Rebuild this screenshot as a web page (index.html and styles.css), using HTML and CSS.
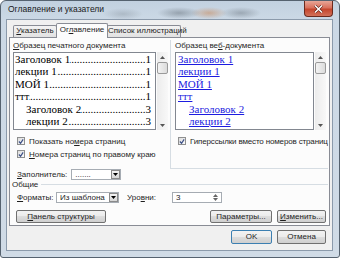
FILE: index.html
```html
<!DOCTYPE html>
<html>
<head>
	<meta charset="UTF-8">
	<title>Оглавление и указатели</title>
<link rel="stylesheet" href="styles.css">
</head>
<body>
<div class="window">
	<div class="titlebar">
		<span class="title">Оглавление и указатели</span>
		<span class="close"><svg width="9" height="8" viewBox="0 0 9 8"><path d="M1 0.5 L8 7.5 M8 0.5 L1 7.5" stroke="#5a1d12" stroke-width="2.6"/><path d="M1 0.5 L8 7.5 M8 0.5 L1 7.5" stroke="#fff" stroke-width="1.5"/></svg></span>
	</div>

	<div class="client">
		<div class="tabs">
			<span class="tab tab-index"><u>У</u>казатель</span>
			<span class="tab tab-toc active">Ог<u>л</u>авление</span>
			<span class="tab tab-figures">Список иллюстраций</span>
		</div>

		<div class="panel">
			<div class="top">
				<div class="col-left">
					<div class="label"><u>О</u>бразец печатного документа</div>
					<div class="preview">
						<div class="preview-text">
							<div class="toc-line"><span>Заголовок 1</span><span class="dots"></span><span>1</span></div>
							<div class="toc-line"><span>лекции 1</span><span class="dots"></span><span>1</span></div>
							<div class="toc-line"><span>МОЙ 1</span><span class="dots"></span><span>1</span></div>
							<div class="toc-line"><span>ттт</span><span class="dots"></span><span>1</span></div>
							<div class="toc-line level2"><span>Заголовок 2</span><span class="dots"></span><span>3</span></div>
							<div class="toc-line level2"><span>лекции 2</span><span class="dots"></span><span>3</span></div>
						</div>
						<div class="scrollbar">
							<span class="arrow"><svg width="5" height="3" viewBox="0 0 5 3"><path d="M0 3 L2.5 0 L5 3Z" fill="#555"/></svg></span>
							<span class="thumb"></span>
							<span class="track"></span>
							<span class="arrow"><svg width="5" height="3" viewBox="0 0 5 3"><path d="M0 0 L2.5 3 L5 0Z" fill="#555"/></svg></span>
						</div>
					</div>
					<label class="check check-first"><span class="box"><svg width="7" height="7" viewBox="0 0 7 7"><path d="M1 3.5 L3 5.5 L6 1" fill="none" stroke="#3b4f86" stroke-width="1.4"/></svg></span>Показать но<u>м</u>ера страниц</label>
					<label class="check"><span class="box"><svg width="7" height="7" viewBox="0 0 7 7"><path d="M1 3.5 L3 5.5 L6 1" fill="none" stroke="#3b4f86" stroke-width="1.4"/></svg></span><u>Н</u>омера страниц по правому краю</label>
				</div>

				<div class="col-right">
					<div class="label">Образец ве<u>б</u>-документа</div>
					<div class="preview">
						<div class="preview-text web">
							<div class="web-line"><a>Заголовок 1</a></div>
							<div class="web-line"><a>лекции 1</a></div>
							<div class="web-line"><a>МОЙ 1</a></div>
							<div class="web-line"><a>ттт</a></div>
							<div class="web-line level2"><a>Заголовок 2</a></div>
							<div class="web-line level2"><a>лекции 2</a></div>
						</div>
						<div class="scrollbar">
							<span class="arrow"><svg width="5" height="3" viewBox="0 0 5 3"><path d="M0 3 L2.5 0 L5 3Z" fill="#555"/></svg></span>
							<span class="thumb"></span>
							<span class="track"></span>
							<span class="arrow"><svg width="5" height="3" viewBox="0 0 5 3"><path d="M0 0 L2.5 3 L5 0Z" fill="#555"/></svg></span>
						</div>
					</div>
					<label class="check check-first check-web"><span class="box"><svg width="7" height="7" viewBox="0 0 7 7"><path d="M1 3.5 L3 5.5 L6 1" fill="none" stroke="#3b4f86" stroke-width="1.4"/></svg></span>Гиперссылки вместо номеров страниц</label>
				</div>
			</div>

			<div class="row row-filler">
				<span class="row-label filler-label"><u>З</u>аполнитель:</span>
				<span class="select select-filler"><span class="select-value">.......</span><span class="drop"><svg width="5" height="3" viewBox="0 0 5 3"><path d="M0 0 L2.5 3 L5 0Z" fill="#000"/></svg></span></span>
			</div>

			<div class="group-title">Общие</div>

			<div class="row row-formats">
				<span class="row-label formats-label"><u>Ф</u>орматы:</span>
				<span class="select select-formats"><span class="select-value">Из шаблона</span><span class="drop"><svg width="5" height="3" viewBox="0 0 5 3"><path d="M0 0 L2.5 3 L5 0Z" fill="#000"/></svg></span></span>
				<span class="row-label levels-label">Уро<u>в</u>ни:</span>
				<span class="spinner"><span class="select-value">3</span><span class="spin"><svg width="5" height="3" viewBox="0 0 5 3"><path d="M0 3 L2.5 0 L5 3Z" fill="#666"/></svg><svg width="5" height="3" viewBox="0 0 5 3"><path d="M0 0 L2.5 3 L5 0Z" fill="#666"/></svg></span></span>
			</div>

			<div class="row row-buttons">
				<button type="button" class="btn btn-structure"><u>П</u>анель структуры</button>
				<span class="spacer"></span>
				<button type="button" class="btn btn-params">Параметры...</button>
				<button type="button" class="btn btn-edit"><u>И</u>зменить...</button>
			</div>
		</div>

		<div class="footer">
			<button type="button" class="btn btn-ok">OK</button>
			<button type="button" class="btn btn-cancel">Отмена</button>
		</div>
	</div>
</div>
</body>
</html>
```

FILE: styles.css
```css
body {
	margin: 0;
	width: 340px;
	height: 258px;
	overflow: hidden;
	background: #ffffff;
	font-family: "Liberation Sans", Arial, sans-serif;
	font-size: 8px;
	color: #1e1e1e;
}
u {
	text-decoration: underline;
	text-underline-offset: 1px;
}
.window {
	width: 340px;
	height: 258px;
	box-sizing: border-box;
	border: 1px solid #55626f;
	border-radius: 6px 6px 3px 3px;
	padding: 0 6px 6px 5px;
	display: flex;
	flex-direction: column;
	background:
		radial-gradient(ellipse 22px 6px at 178px 12px, rgba(90, 100, 110, 0.45), transparent),
		radial-gradient(ellipse 18px 6px at 208px 12px, rgba(200, 120, 60, 0.45), transparent),
		radial-gradient(ellipse 20px 6px at 240px 12px, rgba(90, 100, 110, 0.4), transparent),
		radial-gradient(ellipse 20px 6px at 122px 13px, rgba(110, 120, 130, 0.3), transparent),
		linear-gradient(180deg, #c2d1e0 0, #cbd8e5 18px, #d0dbe6 100%);
}

/* title bar */
.titlebar {
	height: 18px;
	display: flex;
	justify-content: space-between;
	align-items: flex-start;
}
.title {
	padding: 3px 0 0 2px;
	font-size: 8.5px;
	line-height: 11px;
	color: #1a1a1a;
}
.close {
	width: 29px;
	height: 16px;
	box-sizing: border-box;
	border: 1px solid #6b2a1e;
	border-top: none;
	border-radius: 0 0 4px 4px;
	background: linear-gradient(180deg, #e8a697 0, #d9715d 45%, #c5462d 55%, #d2715a 100%);
	display: flex;
	justify-content: center;
	align-items: center;
}

/* client area */
.client {
	flex: 1;
	border: 1px solid #8b9aab;
	background: #f0f0f0;
	display: flex;
	flex-direction: column;
}
.tabs {
	display: flex;
	align-items: flex-end;
	height: 17px;
	padding-left: 6px;
}
.tab {
	height: 12px;
	box-sizing: border-box;
	border: 1px solid #898c95;
	border-bottom: none;
	border-radius: 2px 2px 0 0;
	background: linear-gradient(180deg, #f3f3f3, #e2e2e2);
	text-align: center;
	line-height: 10px;
	white-space: nowrap;
}
.tab-index {
	width: 44px;
}
.tab-toc {
	width: 52px;
	margin-left: -1px;
}
.tab-figures {
	width: 74px;
	margin-left: -1px;
}
.tab.active {
	height: 15px;
	margin-bottom: -1px;
	background: #fcfcfc;
	line-height: 12px;
	position: relative;
	z-index: 1;
}

.panel {
	height: 189px;
	margin: 0 2px;
	box-sizing: border-box;
	border: 1px solid #898c95;
	background: #fcfcfc;
	display: flex;
	flex-direction: column;
}
.top {
	height: 131px;
	display: flex;
}
.col-left {
	width: 158px;
	box-sizing: border-box;
	padding: 3px 0 0 3px;
}
.col-right {
	flex: 1;
	margin: 2px 1px 0 2px;
	border-left: 1px solid #d6dde3;
	border-bottom: 1px solid #d6dde3;
	padding: 1px 0 0 4px;
}
.label {
	height: 10px;
	line-height: 10px;
	white-space: nowrap;
}

/* preview boxes */
.preview {
	display: flex;
	height: 78px;
	margin-top: 1px;
}
.preview-text {
	width: 143px;
	box-sizing: border-box;
	border: 1px solid #828790;
	background: #ffffff;
	padding: 0 4px 0 1px;
	overflow: hidden;
	font-family: "Liberation Serif", serif;
	font-size: 11px;
	line-height: 12.4px;
	color: #000;
}
.preview-text.web {
	width: 139px;
	padding-left: 2px;
}
.toc-line {
	display: flex;
	white-space: nowrap;
}
.level2 {
	padding-left: 11px;
}
.dots {
	flex: 1;
	overflow: hidden;
	direction: rtl;
}
.dots::before {
	content: "..........................................................................................";
}
.web-line a {
	color: #1c1ce0;
	text-decoration: underline;
}
.scrollbar {
	width: 11px;
	margin-left: 1px;
	display: flex;
	flex-direction: column;
	background: linear-gradient(90deg, #ececec, #f8f8f8);
}
.arrow {
	height: 10px;
	display: flex;
	justify-content: center;
	align-items: center;
}
.thumb {
	height: 12px;
	box-sizing: border-box;
	border: 1px solid #9a9a9a;
	border-radius: 2px;
	background: linear-gradient(90deg, #f3f3f3, #dcdcdc);
}
.track {
	flex: 1;
}

/* checkboxes */
.check {
	display: flex;
	align-items: center;
	height: 10px;
	margin: 3px 0 0 4px;
	white-space: nowrap;
}
.check-first {
	margin-top: 6px;
}
.check-web {
	margin-left: 3px;
	letter-spacing: -0.15px;
}
.box {
	width: 8px;
	height: 8px;
	box-sizing: border-box;
	border: 1px solid #8e8f8f;
	background: linear-gradient(135deg, #dcdcdc, #fbfbfb);
	margin-right: 4px;
	display: flex;
	justify-content: center;
	align-items: center;
}

/* rows below */
.row {
	display: flex;
	align-items: center;
	height: 11px;
	padding-left: 7px;
	white-space: nowrap;
}
.filler-label {
	margin-right: 4px;
}
.formats-label {
	width: 39px;
}
.levels-label {
	width: 45px;
	margin-left: 8px;
}
.select {
	height: 11px;
	box-sizing: border-box;
	border: 1px solid #a6acb3;
	background: #ffffff;
	display: flex;
	align-items: center;
}
.select-filler {
	width: 50px;
}
.select-formats {
	width: 63px;
}
.select-value {
	flex: 1;
	padding-left: 3px;
	line-height: 9px;
}
.drop {
	width: 9px;
	height: 9px;
	box-sizing: border-box;
	border: 1px solid #8a8a8a;
	background: linear-gradient(180deg, #f4f4f4, #d6d6d6);
	display: flex;
	justify-content: center;
	align-items: center;
}
.spinner {
	width: 50px;
	height: 11px;
	box-sizing: border-box;
	border: 1px solid #a6acb3;
	background: #ffffff;
	display: flex;
	align-items: center;
}
.spin {
	width: 9px;
	display: flex;
	flex-direction: column;
	align-items: center;
	gap: 1px;
	margin-right: 1px;
}
.group-title {
	display: flex;
	align-items: center;
	height: 9px;
	margin: 0 1px 0 2px;
	line-height: 9px;
}
.group-title::after {
	content: "";
	flex: 1;
	border-top: 1px solid #d6dde3;
	margin-left: 3px;
}
.row-formats {
	margin-top: 3px;
}
.row-buttons {
	height: 13px;
	margin-top: 7px;
	padding: 0 3px 0 6px;
}
.spacer {
	flex: 1;
}

/* buttons */
.btn {
	height: 13px;
	box-sizing: border-box;
	border: 1px solid #707070;
	border-radius: 2px;
	background: linear-gradient(180deg, #f2f2f2 0, #ebebeb 50%, #dddddd 50%, #cfcfcf 100%);
	font-family: "Liberation Sans", Arial, sans-serif;
	font-size: 8px;
	color: #1e1e1e;
	padding: 0;
	line-height: 10px;
	text-align: center;
}
.btn-structure {
	width: 90px;
}
.btn-params {
	width: 62px;
}
.btn-edit {
	width: 49px;
	margin-left: 5px;
}
.footer {
	display: flex;
	justify-content: flex-end;
	gap: 5px;
	padding: 4px 6px 0 0;
}
.btn-ok {
	width: 41px;
	height: 14px;
	border-color: #3c7fb1;
}
.btn-cancel {
	width: 49px;
	height: 14px;
}
```
